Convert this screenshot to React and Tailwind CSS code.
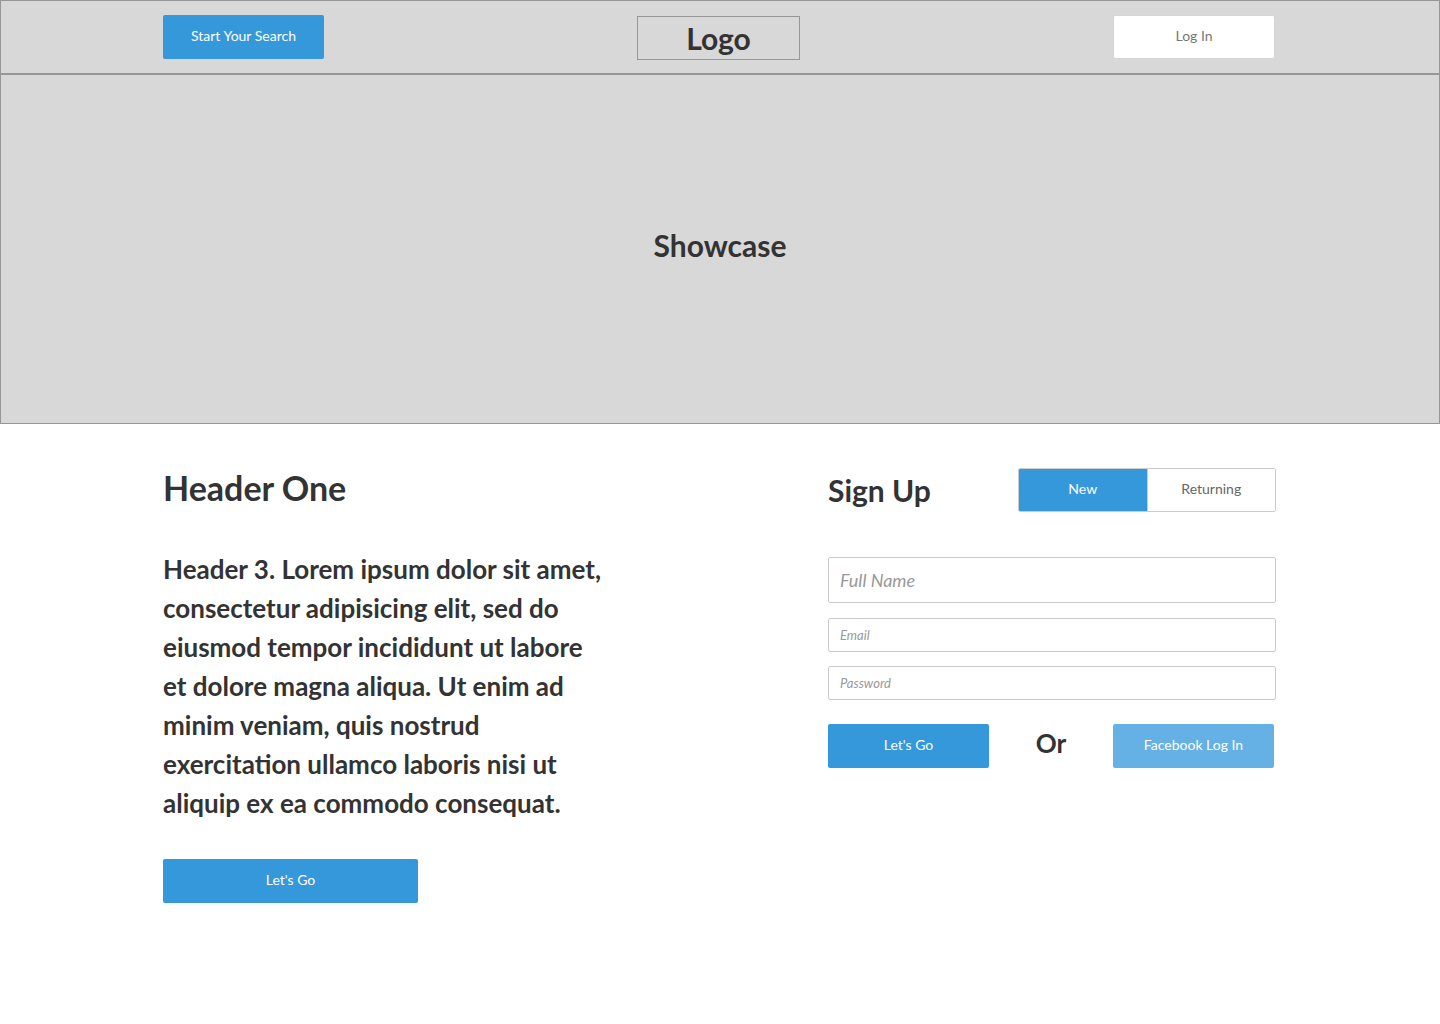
import React, { useState } from 'react';

const LATO = "font-['Lato','Liberation_Sans',sans-serif]";

export default function App() {
  const [mode, setMode] = useState('new');

  return (
    <div className={`${LATO} min-h-[1024px] bg-white text-[#333333]`}>
      {/* Top bar */}
      <header className="h-[74px] border border-[#979797] bg-[#d8d8d8]">
        <div className="flex h-full items-center justify-between pl-[162px] pr-[164px]">
          <button className="h-[44px] w-[161px] rounded-[2px] bg-[#3498db] pb-[3px] text-[14px] text-white">
            Start Your Search
          </button>
          <div className="mt-[2px] flex h-[44px] w-[163px] items-center justify-center border border-[#979797] text-[30px] font-bold leading-none">
            Logo
          </div>
          <button className="h-[44px] w-[162px] rounded-[2px] border border-[#d4d4d4] bg-white pb-[3px] text-[14px] text-[#777777]">
            Log In
          </button>
        </div>
      </header>

      {/* Showcase */}
      <section className="flex h-[350px] items-center justify-center border border-[#979797] bg-[#d8d8d8] pb-[7px]">
        <h2 className="text-[30px] font-bold">Showcase</h2>
      </section>

      {/* Main */}
      <main className="flex justify-between pl-[163px] pr-[164px] pt-[44px]">
        <div className="w-[445px]">
          <h1 className="text-[34px] font-bold leading-[40px]">Header One</h1>
          <p className="mt-[42px] text-[26px] font-bold leading-[39px]">
            Header 3. Lorem ipsum dolor sit amet, consectetur adipisicing elit, sed do eiusmod tempor incididunt ut
            labore et dolore magna aliqua. Ut enim ad minim veniam, quis nostrud exercitation ullamco laboris nisi ut
            aliquip ex ea commodo consequat.
          </p>
          <button className="mt-[36px] h-[44px] w-[255px] rounded-[2px] bg-[#3498db] pb-[3px] text-[14px] text-white">
            Let's Go
          </button>
        </div>

        <div className="w-[448px]">
          <div className="flex h-[44px] items-center justify-between">
            <h2 className="text-[30px] font-bold leading-none">Sign Up</h2>
            <div className="flex h-[44px] w-[258px] overflow-hidden rounded-[2px] border border-[#cccccc]">
              <button
                onClick={() => setMode('new')}
                className={`flex-1 pb-[3px] text-[14px] ${mode === 'new' ? 'bg-[#3498db] text-white' : 'bg-white text-[#666666]'}`}
              >
                New
              </button>
              <button
                onClick={() => setMode('returning')}
                className={`flex-1 border-l border-[#cccccc] pb-[3px] text-[14px] ${mode === 'returning' ? 'bg-[#3498db] text-white' : 'bg-white text-[#666666]'}`}
              >
                Returning
              </button>
            </div>
          </div>

          <input
            placeholder="Full Name"
            className="mt-[45px] block h-[46px] w-full rounded-[2px] border border-[#cccccc] px-[11px] text-[18px] italic outline-none placeholder:text-[#999999]"
          />
          <input
            placeholder="Email"
            className="mt-[15px] block h-[34px] w-full rounded-[2px] border border-[#cccccc] px-[11px] text-[13px] italic outline-none placeholder:text-[#999999]"
          />
          <input
            type="password"
            placeholder="Password"
            className="mt-[14px] block h-[34px] w-full rounded-[2px] border border-[#cccccc] px-[11px] text-[13px] italic outline-none placeholder:text-[#999999]"
          />

          <div className="mt-[24px] flex w-[446px] items-center justify-between">
            <button className="h-[44px] w-[161px] rounded-[2px] bg-[#3498db] pb-[3px] text-[14px] text-white">
              Let's Go
            </button>
            <span className="mb-[6px] text-[26px] font-bold leading-none">Or</span>
            <button className="h-[44px] w-[161px] rounded-[2px] bg-[#65b0e4] pb-[3px] text-[14px] text-white">
              Facebook Log In
            </button>
          </div>
        </div>
      </main>
    </div>
  );
}
